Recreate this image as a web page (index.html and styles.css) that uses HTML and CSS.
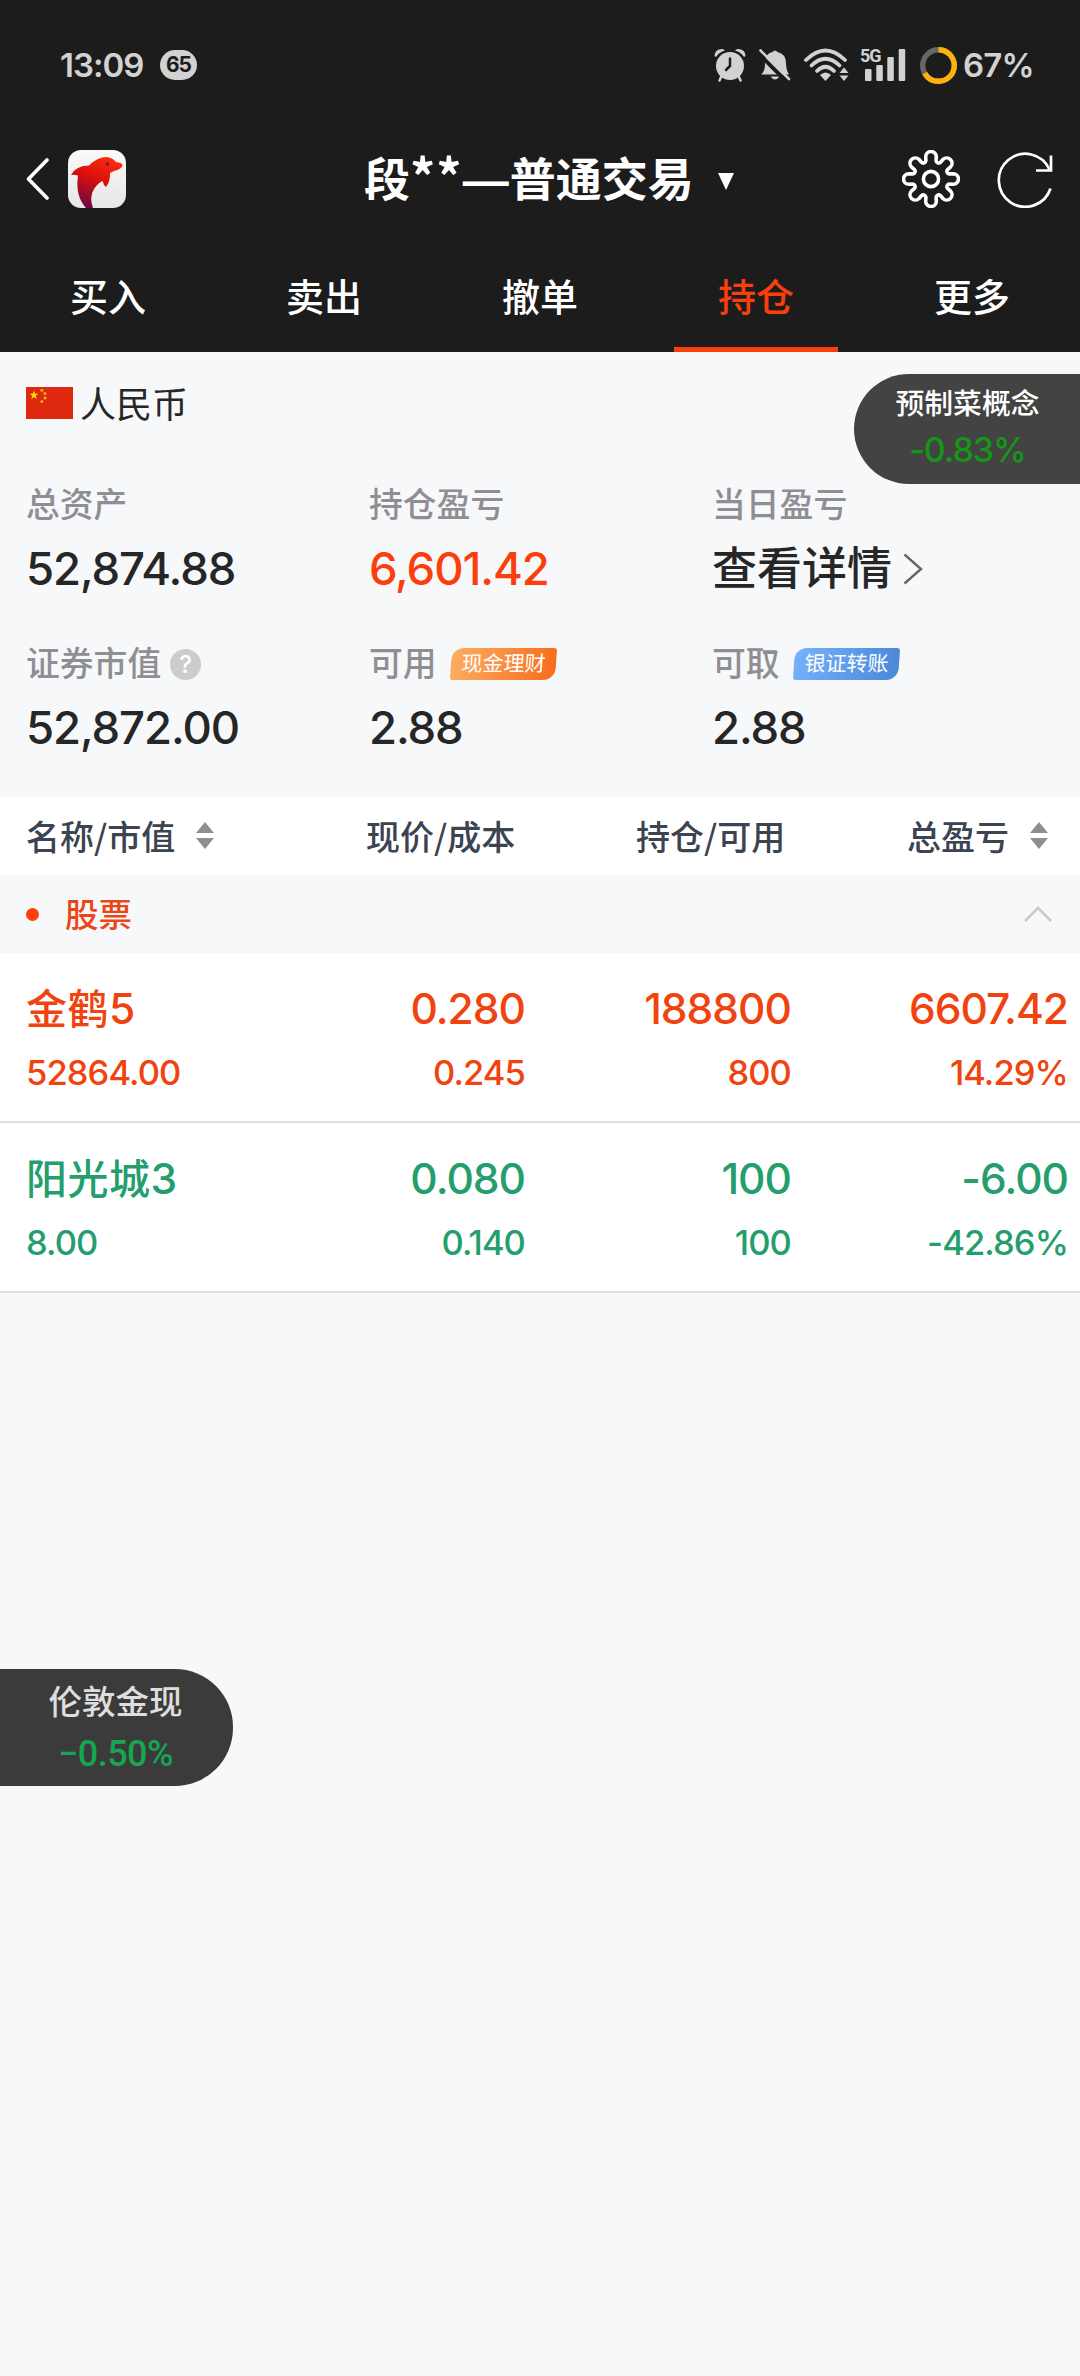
FILE: index.html
```html
<!DOCTYPE html>
<html lang="zh-CN">
<head>
<meta charset="UTF-8" />
<meta name="viewport" content="width=device-width, initial-scale=1" />
<title>持仓</title>
<link rel="stylesheet" href="styles.css">
</head>
<body>

<header class="header">
  <div class="status-bar">
    <span class="time">13:09</span>
    <span class="count">65</span>
    <div class="status-icons">
      <svg class="alarm" width="32" height="34" viewBox="0 0 32 34">
        <circle cx="16" cy="18" r="14" fill="#d2d2d2"/>
        <path d="M0.500 8Q1 1 8 1Q10 1 11 2.500Q5 4 2 9ZM31.500 8Q31 1 24 1Q22 1 21 2.500Q27 4 30 9Z" fill="#d2d2d2"/>
        <path d="M7.500 28l-2 4.500M24.500 28l2 4.500" stroke="#d2d2d2" stroke-width="2.500" stroke-linecap="round"/>
        <path d="M16 10.500v7.500l-4 4" fill="none" stroke="#1c1c1c" stroke-width="2.500" stroke-linecap="round"/>
      </svg>
      <svg class="bell" width="32" height="32" viewBox="0 0 32 32">
        <path d="M2 25.500Q6 22 6 16Q5 5 13.500 3Q16 0 18.500 3Q27 5 27 14Q27 21 30 25.500Z" fill="#d2d2d2"/>
        <path d="M11.500 27.500h9q-4.500 6-9 0z" fill="#d2d2d2"/>
        <path d="M-1 4L27 32" stroke="#1c1c1c" stroke-width="4"/>
        <path d="M1.500 1.500L30 30" stroke="#d2d2d2" stroke-width="2.600" stroke-linecap="round"/>
      </svg>
      <svg class="wifi" width="45" height="34" viewBox="0 0 45 34">
        <g fill="none" stroke="#d2d2d2" stroke-width="3.800" stroke-linecap="round">
          <path d="M2 12Q21.500 -7 41 12"/>
          <path d="M7.500 17.500Q21.500 4 35.500 17.500"/>
          <path d="M13 23Q21.500 14.500 30 23"/>
        </g>
        <path d="M16 27Q21.500 22 27 27L21.500 33Z" fill="#d2d2d2"/>
        <path d="M40 19.500l4.500 5.500h-9zM40 33l4.500-5.500h-9z" fill="#d2d2d2"/>
      </svg>
      <div class="signal">
        <span class="net">5G</span>
        <svg width="46" height="34" viewBox="0 0 46 34" fill="#d2d2d2">
          <rect x="5" y="21" width="6.500" height="12" rx="1"/>
          <rect x="16.300" y="17" width="6.500" height="16" rx="1"/>
          <rect x="27.300" y="9" width="6.500" height="24" rx="1"/>
          <rect x="38.700" y="1" width="6.500" height="32" rx="1"/>
        </svg>
      </div>
      <svg class="ring" width="37" height="37" viewBox="0 0 37 37">
        <circle cx="18.500" cy="18.500" r="15.800" fill="none" stroke="#666" stroke-width="5.400"/>
        <circle cx="18.500" cy="18.500" r="15.800" fill="none" stroke="#fcb10b" stroke-width="5.400" pathLength="100" stroke-dasharray="67 100" transform="rotate(-90 18.500 18.500)"/>
      </svg>
      <span class="battery">67%</span>
    </div>
  </div>

  <div class="nav">
    <svg class="back" width="24" height="44" viewBox="0 0 24 44">
      <path d="M21 3L2.500 22L21 41" fill="none" stroke="#fff" stroke-width="3.600" stroke-linecap="round" stroke-linejoin="round"/>
    </svg>
    <svg class="logo" width="58" height="58" viewBox="0 0 58 58">
      <defs>
        <linearGradient id="fish" x1="0.700" y1="0" x2="0.250" y2="1">
          <stop offset="0" stop-color="#fb2c0c"/>
          <stop offset="0.450" stop-color="#d80f0c"/>
          <stop offset="1" stop-color="#6b0745"/>
        </linearGradient>
        <linearGradient id="tile" x1="0" y1="0" x2="0" y2="1">
          <stop offset="0" stop-color="#fafafa"/>
          <stop offset="1" stop-color="#e6e6e6"/>
        </linearGradient>
      </defs>
      <rect width="58" height="58" rx="13" fill="url(#tile)"/>
      <path d="M3 25Q8 15.500 21 15.500Q29 7 39 7Q45 8 48 12Q54 12.500 54.500 15Q54 19 46 21L42 23Q42.500 31 38 37Q35.500 35 34.500 31Q30 33 26 39Q21 47 25 58H18Q7 46 10 25.500Q6 24.500 3 25Z" fill="url(#fish)"/>
      <circle cx="39.500" cy="14" r="1.700" fill="#7c1622"/>
    </svg>
    <h1 class="title">段<span class="mask">**</span><span class="dash">—</span>普通交易</h1>
    <svg class="caret" width="16" height="17" viewBox="0 0 16 17"><path d="M0 0h16l-8 17z" fill="#fff"/></svg>
    <svg class="gear" width="58" height="58" viewBox="-29 -29 58 58" fill="none" stroke="#fff" stroke-width="3.600" stroke-linejoin="round">
      <circle r="7.600"/>
      <path id="gear-path"/>
    </svg>
    <svg class="refresh" width="57" height="57" viewBox="0 0 57 57" fill="none" stroke="#fff" stroke-width="2.700">
      <path d="M53.500 37.500A26.500 26.500 0 1 1 52.500 18.500"/>
      <path d="M54 4.500v15H39"/>
    </svg>
  </div>

  <nav class="tabs">
    <a class="tab">买入</a>
    <a class="tab">卖出</a>
    <a class="tab">撤单</a>
    <a class="tab active">持仓</a>
    <a class="tab">更多</a>
  </nav>
</header>

<section class="summary">
  <div class="currency">
    <svg width="47" height="32" viewBox="0 0 47 32">
      <rect width="47" height="32" fill="#de2910"/>
      <path d="M8 3.500l1.100 3.300h3.400l-2.800 2 1.100 3.400L8 10.100l-2.800 2.100 1.100-3.400-2.800-2h3.400z" fill="#ffde00"/>
      <g fill="#e9b508">
        <circle cx="15.800" cy="3.200" r="1.500"/>
        <circle cx="19" cy="6.500" r="1.500"/>
        <circle cx="19" cy="11" r="1.500"/>
        <circle cx="15.800" cy="14.500" r="1.500"/>
      </g>
    </svg>
    <span>人民币</span>
  </div>

  <div class="assets">
    <div class="asset">
      <div class="label">总资产</div>
      <div class="value">52,874.88</div>
    </div>
    <div class="asset">
      <div class="label">持仓盈亏</div>
      <div class="value red">6,601.42</div>
    </div>
    <div class="asset">
      <div class="label">当日盈亏</div>
      <div class="value detail">查看详情
        <svg width="20" height="32" viewBox="0 0 20 32"><path d="M1.500 1.500L18 16L1.500 30.500" fill="none" stroke="#666" stroke-width="2.400"/></svg>
      </div>
    </div>
    <div class="asset">
      <div class="label">证券市值<span class="help">?</span></div>
      <div class="value">52,872.00</div>
    </div>
    <div class="asset">
      <div class="label">可用<span class="tag orange">现金理财</span></div>
      <div class="value">2.88</div>
    </div>
    <div class="asset">
      <div class="label">可取<span class="tag blue">银证转账</span></div>
      <div class="value">2.88</div>
    </div>
  </div>
</section>

<div class="row table-head">
  <div>名称/市值
    <svg class="sort" width="18" height="27" viewBox="0 0 18 27"><path d="M9 0l9 11H0zM9 27l9-11H0z" fill="#8e8e93"/></svg>
  </div>
  <div>现价/成本</div>
  <div>持仓/可用</div>
  <div>总盈亏
    <svg class="sort" width="18" height="27" viewBox="0 0 18 27"><path d="M9 0l9 11H0zM9 27l9-11H0z" fill="#8e8e93"/></svg>
  </div>
</div>

<div class="group">
  <i class="dot"></i>
  <span>股票</span>
  <svg width="28" height="16" viewBox="0 0 28 16"><path d="M1 15L14 2L27 15" fill="none" stroke="#ccc" stroke-width="2.800"/></svg>
</div>

<div class="row stock up">
  <div><b class="name">金鹤<em>5</em></b><span>52864.00</span></div>
  <div><b>0.280</b><span>0.245</span></div>
  <div><b>188800</b><span>800</span></div>
  <div><b>6607.42</b><span>14.29%</span></div>
</div>
<div class="row stock down">
  <div><b class="name">阳光城<em>3</em></b><span>8.00</span></div>
  <div><b>0.080</b><span>0.140</span></div>
  <div><b>100</b><span>100</span></div>
  <div><b>-6.00</b><span>-42.86%</span></div>
</div>

<!-- floating quotes -->
<div class="float float-right">
  <div class="float-name">预制菜概念</div>
  <div class="float-rate">-0.83%</div>
</div>
<div class="float float-left">
  <div class="float-name">伦敦金现</div>
  <div class="float-rate">−0.50%</div>
</div>

<script>
  // eight-tooth gear outline: round tips joined by round valleys
  let d = '';
  for (let i = 0; i < 8; i++) {
    const pt = (r, deg) => {
      const a = (i * 45 + deg - 90) * Math.PI / 180;
      return (r * Math.cos(a)).toFixed(2) + ' ' + (r * Math.sin(a)).toFixed(2);
    };
    d += (i ? 'L' : 'M') + pt(22.8, -13.5);
    d += 'A5.3 5.3 0 0 1 ' + pt(22.8, 13.5);
    d += 'L' + pt(19, 15.5);
    d += 'A2.6 2.6 0 0 0 ' + pt(19, 29.5);
  }
  document.getElementById('gear-path').setAttribute('d', d + 'Z');
</script>

</body>
</html>
```

FILE: styles.css
```css
* {
  box-sizing: border-box;
}

body {
  margin: 0;
  height: 2376px;
  position: relative;
  background: #f7f8fa;
  color: #262626;
  font-family: Inter, "Noto Sans CJK SC", sans-serif;
  overflow: hidden;
}

svg {
  display: block;
  flex: none;
}

.header {
  height: 352px;
  background: #1c1c1c;
  color: #fff;
}

/* status bar */
.status-bar {
  height: 130px;
  display: flex;
  align-items: center;
  padding: 0 49px 0 60px;
  color: #d2d2d2;
  font-weight: 600;
}

.time {
  width: 100px;
  font-size: 33px;
  letter-spacing: -1px;
}

.count {
  width: 37px;
  height: 30px;
  line-height: 30px;
  border-radius: 15px;
  background: #d2d2d2;
  color: #1c1c1c;
  font-size: 21px;
  font-weight: 700;
  letter-spacing: -1px;
  text-align: center;
}

.status-icons {
  margin-left: auto;
  display: flex;
  align-items: center;
}

.bell {
  margin-left: 13px;
}

.wifi {
  margin-left: 13px;
}

.signal {
  position: relative;
  margin-left: 11px;
}

.net {
  position: absolute;
  left: 0;
  top: -1px;
  font-family: Roboto, sans-serif;
  font-size: 18px;
  line-height: 18px;
  font-weight: 700;
  letter-spacing: -1px;
}

.ring {
  margin-left: 14px;
}

.battery {
  width: 68px;
  margin-left: 6px;
  font-size: 33px;
  letter-spacing: -0.8px;
}

/* title bar */
.nav {
  height: 98px;
  display: flex;
  align-items: center;
  padding: 0 26px;
}

.logo {
  margin-left: 18px;
}

.title {
  margin: -2px 0 0 238px;
  width: 328px;
  font-family: "Noto Sans CJK SC", sans-serif;
  font-size: 46px;
  line-height: 60px;
  font-weight: 700;
  white-space: nowrap;
}

.mask {
  font-size: 50px;
  letter-spacing: 1px;
  line-height: 0;
}

.dash {
  margin-right: 1px;
  font-family: "Liberation Sans", sans-serif;
}

.caret {
  margin-left: 26px;
  margin-top: 4px;
}

.gear {
  margin-left: auto;
}

.refresh {
  margin-left: 37px;
}

/* tabs */
.tabs {
  height: 124px;
  display: flex;
}

.tab {
  flex: 1;
  position: relative;
  text-align: center;
  font-size: 38px;
  line-height: 138px;
  font-weight: 500;
}

.tab.active {
  color: #fa3f0c;
}

.tab.active::after {
  content: "";
  position: absolute;
  left: 26px;
  bottom: 0;
  width: 164px;
  height: 5px;
  background: #fa3f0c;
}

/* asset summary */
.summary {
  height: 445px;
  padding: 26px 26px 0;
}

.currency {
  height: 50px;
  display: flex;
  align-items: center;
  gap: 7px;
  font-size: 36px;
}

.currency span {
  line-height: 50px;
  margin-top: 3px;
}

.assets {
  display: grid;
  grid-template-columns: 343px 343px 1fr;
  grid-auto-rows: 159px;
  padding-top: 51px;
}

.label {
  height: 52px;
  display: flex;
  align-items: center;
  color: #8e8e93;
  font-size: 33.8px;
  font-weight: 500;
  line-height: 52px;
}

.value {
  height: 76px;
  line-height: 76px;
  font-size: 45.5px;
  font-weight: 500;
  letter-spacing: -1.1px;
  white-space: nowrap;
}

.value.red {
  color: #fa3f0c;
}

.detail {
  display: flex;
  align-items: center;
  gap: 11px;
  font-size: 45px;
  letter-spacing: 0;
}

.help {
  width: 31px;
  height: 31px;
  margin-left: 9px;
  border-radius: 50%;
  background: #ccc;
  color: #fff;
  font-size: 24px;
  line-height: 31px;
  text-align: center;
}

.tag {
  width: 105px;
  height: 32px;
  margin-left: 14px;
  border-radius: 12px 3px 12px 3px;
  color: #fff;
  font-size: 21px;
  font-weight: 400;
  line-height: 31px;
  text-align: center;
  transform: skewX(-4deg);
}

.orange {
  background: linear-gradient(100deg, #fdae62, #f76b1c);
}

.blue {
  background: linear-gradient(100deg, #74b2fb, #4a88d8);
}

/* positions table */
.row {
  display: grid;
  grid-template-columns: 314px 185px 266px 277px;
  padding-left: 26px;
  background: #fff;
}

.row > div {
  text-align: right;
}

.row > div:first-child {
  text-align: left;
}

.row.table-head {
  height: 78px;
  padding-bottom: 2px;
  grid-template-columns: 340px 270px 271px 1fr;
  color: #3c4351;
  font-family: "Noto Sans CJK SC", sans-serif;
  font-size: 34px;
  font-weight: 500;
}

.table-head > div {
  display: flex;
  align-items: center;
}

.table-head .sort {
  margin-left: 21px;
}

.group {
  height: 78px;
  display: flex;
  align-items: center;
  padding: 0 28px 0 26px;
  color: #ea4718;
  font-size: 33.5px;
  font-weight: 500;
}

.group span {
  line-height: 50px;
  margin-top: 2px;
}

.dot {
  width: 13px;
  height: 13px;
  margin-right: 26px;
  border-radius: 50%;
  background: #ff3f05;
}

.group svg {
  margin-left: auto;
}

.stock {
  height: 170px;
  padding-top: 24px;
  border-bottom: 2px solid #dedfe1;
}

.stock b {
  display: block;
  font-size: 42.5px;
  line-height: 64px;
  font-weight: 500;
  letter-spacing: -1px;
}

.stock .name {
  font-size: 41px;
  letter-spacing: 0.5px;
}

.stock em {
  font-size: 42.5px;
  font-style: normal;
}

.stock span {
  display: block;
  font-size: 34.5px;
  line-height: 64px;
  font-weight: 500;
  letter-spacing: -0.9px;
}

.up {
  color: #f0430f;
}

.down {
  color: #239e6c;
}

/* floating quotes */
.float {
  position: absolute;
  text-align: center;
}

.float-right {
  top: 374px;
  right: 0;
  width: 226px;
  height: 110px;
  padding: 8px 0 0 1px;
  border-radius: 55px 0 0 55px;
  background: #434343;
  color: #fff;
}

.float-right .float-name {
  font-size: 28.8px;
  line-height: 44px;
  font-weight: 500;
}

.float-right .float-rate {
  color: #169616;
  font-size: 34px;
  line-height: 48px;
  font-weight: 500;
  letter-spacing: -1px;
}

.float-left {
  top: 1669px;
  left: 0;
  width: 233px;
  height: 117px;
  padding: 8px 2px 0 0;
  border-radius: 0 58px 58px 0;
  background: #3b3b3b;
  color: #dedede;
}

.float-left .float-name {
  font-size: 33.5px;
  font-weight: 500;
  line-height: 51px;
}

.float-left .float-rate {
  color: #18a551;
  font-family: Roboto, sans-serif;
  font-size: 36px;
  font-weight: 500;
  line-height: 53px;
  letter-spacing: -0.5px;
}
```
